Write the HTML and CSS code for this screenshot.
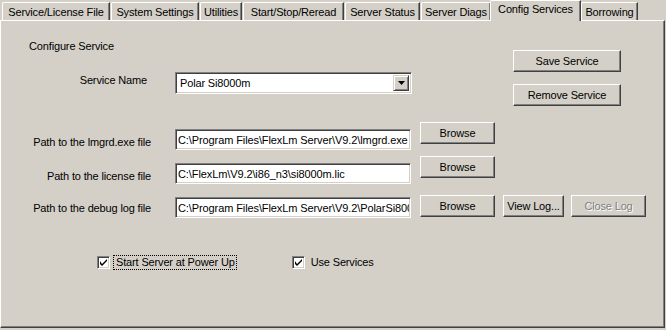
FILE: index.html
```html
<!DOCTYPE html>
<html lang="en">
<head>
  <meta charset="UTF-8" />
  <title>Config Services</title>
  <link rel="stylesheet" href="styles.css">
</head>
<body>
  <div class="window">
    <div class="tabs">
      <div class="tab t1">Service/License File</div>
      <div class="tab t2">System Settings</div>
      <div class="tab t3">Utilities</div>
      <div class="tab t4">Start/Stop/Reread</div>
      <div class="tab t5">Server Status</div>
      <div class="tab t6">Server Diags</div>
      <div class="tab active">Config Services</div>
      <div class="tab t8">Borrowing</div>
    </div>

    <div class="panel">
      <div class="top">
        <div class="service">
          <div class="title">Configure Service</div>
          <div class="service-row">
            <span class="name-label">Service Name</span>
            <div class="combo">
              <span class="combo-text">Polar Si8000m</span>
              <span class="combo-btn">
                <svg width="7" height="4" viewBox="0 0 7 4"><path d="M0 0H7L3.5 4Z" fill="#000"/></svg>
              </span>
            </div>
          </div>
        </div>
        <div class="actions">
          <button class="btn wide">Save Service</button>
          <button class="btn wide">Remove Service</button>
        </div>
      </div>

      <div class="paths">
        <div class="path-row">
          <span class="path-label">Path to the lmgrd.exe file</span>
          <input class="field" type="text" readonly value="C:\Program Files\FlexLm Server\V9.2\lmgrd.exe">
          <button class="btn browse">Browse</button>
        </div>
        <div class="path-row second">
          <span class="path-label">Path to the license file</span>
          <input class="field" type="text" readonly value="C:\FlexLm\V9.2\i86_n3\si8000m.lic">
          <button class="btn browse">Browse</button>
        </div>
        <div class="path-row third">
          <span class="path-label">Path to the debug log file</span>
          <input class="field" type="text" readonly value="C:\Program Files\FlexLm Server\V9.2\PolarSi8000m.log">
          <button class="btn browse">Browse</button>
          <button class="btn view">View Log...</button>
          <button class="btn close" disabled>Close Log</button>
        </div>
      </div>

      <div class="checks">
        <span class="box">
          <svg width="7" height="7" viewBox="0 0 7 7"><path d="M0 2V5L2 7L7 2V-0L2 5Z" fill="#000"/></svg>
        </span>
        <span class="check-label focus">Start Server at Power Up</span>
        <span class="box second-box">
          <svg width="7" height="7" viewBox="0 0 7 7"><path d="M0 2V5L2 7L7 2V-0L2 5Z" fill="#000"/></svg>
        </span>
        <span class="check-label">Use Services</span>
      </div>
    </div>
  </div>
</body>
</html>
```

FILE: styles.css
```css
body {
  margin: 0;
  background: #d4d0c8;
  font-family: 'Liberation Sans', Arial, sans-serif;
  font-size: 11px;
  letter-spacing: -0.15px;
  color: #000;
}
.window {
  width: 666px;
  height: 330px;
}
.tabs {
  display: flex;
  align-items: flex-end;
  gap: 1px;
  height: 20px;
  padding-left: 2px;
}
.tab {
  flex: none;
  box-sizing: border-box;
  height: 18px;
  padding-top: 2px;
  line-height: 15px;
  text-align: center;
  white-space: nowrap;
  border-top: 1px solid #fff;
  border-left: 1px solid #fff;
  border-right: 1px solid #404040;
  border-top-left-radius: 2px;
  box-shadow: inset -1px 0 #808080;
}
.t1 { width: 108px; }
.t2 { width: 88px; }
.t3 { width: 42px; }
.t4 { width: 101px; }
.t5 { width: 75px; }
.t6 { width: 70px; }
.t8 { width: 57px; }
.tab.active {
  position: relative;
  z-index: 1;
  width: 91px;
  height: 21px;
  margin: 0 -1px -1px -2px;
  padding-top: 1px;
  background: #d4d0c8;
}
.panel {
  box-sizing: border-box;
  width: 665px;
  height: 308px;
  border-top: 1px solid #fff;
  border-left: 1px solid #fff;
  border-right: 1px solid #404040;
  border-bottom: 1px solid #404040;
  box-shadow: inset -1px -1px #808080;
}
.top {
  display: flex;
  align-items: flex-start;
  padding-top: 19px;
}
.service {
  margin-left: 28px;
}
.title {
  line-height: 13px;
}
.service-row {
  display: flex;
  align-items: flex-start;
  margin-top: 19px;
}
.name-label {
  width: 118px;
  margin-top: 2px;
  line-height: 13px;
  text-align: right;
}
.combo {
  box-sizing: border-box;
  display: flex;
  align-items: stretch;
  width: 237px;
  height: 22px;
  margin-left: 28px;
  padding: 2px;
  background: #fff;
  border: 1px solid;
  border-color: #808080 #fff #fff #808080;
  box-shadow: inset 1px 1px #404040, inset -1px -1px #d4d0c8;
}
.combo-text {
  flex: 1;
  padding-left: 2px;
  line-height: 16px;
}
.combo-btn {
  box-sizing: border-box;
  display: flex;
  align-items: center;
  justify-content: center;
  width: 16px;
  background: #d4d0c8;
  border: 1px solid;
  border-color: #d4d0c8 #404040 #404040 #d4d0c8;
  box-shadow: inset 1px 1px #fff, inset -1px -1px #808080;
}
.actions {
  display: flex;
  flex-direction: column;
  gap: 12px;
  margin: 10px 43px 0 auto;
}
.btn {
  box-sizing: border-box;
  height: 22px;
  padding: 0;
  font-family: inherit;
  font-size: 11px;
  letter-spacing: -0.15px;
  color: #000;
  background: #d4d0c8;
  border: 1px solid;
  border-color: #fff #404040 #404040 #fff;
  box-shadow: inset -1px -1px #808080;
}
.btn.wide { width: 108px; }
.btn.browse { width: 75px; margin-left: 9px; }
.btn.view { width: 61px; margin-left: 8px; }
.btn.close {
  width: 75px;
  margin-left: 7px;
  color: #808080;
  text-shadow: 1px 1px #fff;
}
.paths {
  margin-top: 16px;
}
.path-row {
  display: flex;
  align-items: flex-start;
  height: 28px;
}
.path-row.second {
  margin-top: 6px;
}
.path-row.third {
  margin-top: 11px;
  height: 23px;
}
.path-label {
  width: 150px;
  margin-top: 14px;
  line-height: 13px;
  text-align: right;
  white-space: nowrap;
}
.path-row.third .path-label {
  margin-top: 7px;
}
.field {
  box-sizing: border-box;
  width: 236px;
  height: 21px;
  margin: 7px 0 0 24px;
  padding: 0 1px 0 2px;
  font-family: inherit;
  font-size: 11px;
  letter-spacing: -0.1px;
  color: #000;
  background: #fff;
  border: 1px solid;
  border-color: #808080 #fff #fff #808080;
  box-shadow: inset 1px 1px #404040, inset -1px -1px #d4d0c8;
  outline: none;
}
.path-row.third .field {
  margin-top: 2px;
}
.checks {
  display: flex;
  align-items: center;
  margin-top: 37px;
  padding-left: 96px;
}
.box {
  box-sizing: border-box;
  display: flex;
  align-items: center;
  justify-content: center;
  width: 13px;
  height: 13px;
  background: #fff;
  border: 1px solid;
  border-color: #808080 #fff #fff #808080;
  box-shadow: inset 1px 1px #404040, inset -1px -1px #d4d0c8;
}
.second-box {
  margin-left: 55px;
}
.check-label {
  margin-left: 3px;
  padding: 0 1px 0 2px;
  line-height: 13px;
  border: 1px solid transparent;
}
.check-label.focus {
  border: 1px dotted #000;
}
```
